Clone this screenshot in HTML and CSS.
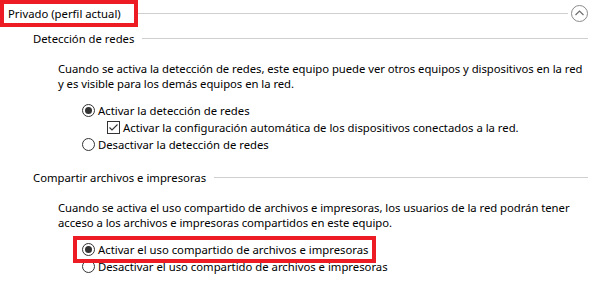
FILE: index.html
```html
<!DOCTYPE html>
<html>
  <head>
    <meta charset="UTF-8">
    <title>Configuración de uso compartido avanzado</title>
    <link rel="stylesheet" href="styles.css">
  </head>
  <body>
    <!-- Perfil privado -->
    <div class="profile-head">
      <span class="profile-title">Privado (perfil actual)</span>
      <span class="rule"></span>
      <button class="collapse-btn" aria-label="Contraer">
        <svg width="17" height="17" viewBox="0 0 17 17">
          <circle cx="8.5" cy="8.5" r="8" fill="none" stroke="#8a8a8a" stroke-width="1"/>
          <polyline points="4.5,10 8.5,6 12.5,10" fill="none" stroke="#6e6e6e" stroke-width="1.2"/>
        </svg>
      </button>
    </div>

    <!-- Detección de redes -->
    <div class="group">
      <div class="group-head">
        <span>Detección de redes</span>
        <span class="rule"></span>
      </div>
      <p class="desc">Cuando se activa la detección de redes, este equipo puede ver otros equipos y dispositivos en la red<br>y es visible para los demás equipos en la red.</p>
      <div class="options">
        <label class="option">
          <svg class="radio" width="13" height="13" viewBox="0 0 13 13">
            <circle cx="6.5" cy="6.5" r="6" fill="#fff" stroke="#333" stroke-width="1"/>
            <circle cx="6.5" cy="6.5" r="3.5" fill="#333"/>
          </svg>
          Activar la detección de redes
        </label>
        <label class="option sub">
          <svg class="check" width="13" height="13" viewBox="0 0 13 13">
            <rect x="0.5" y="0.5" width="12" height="12" fill="#fff" stroke="#333" stroke-width="1"/>
            <polyline points="2.5,6.5 5,9 10.5,3.5" fill="none" stroke="#333" stroke-width="1.1"/>
          </svg>
          Activar la configuración automática de los dispositivos conectados a la red.
        </label>
        <label class="option">
          <svg class="radio" width="13" height="13" viewBox="0 0 13 13">
            <circle cx="6.5" cy="6.5" r="6" fill="#fff" stroke="#333" stroke-width="1"/>
          </svg>
          Desactivar la detección de redes
        </label>
      </div>
    </div>

    <!-- Compartir archivos e impresoras -->
    <div class="group second">
      <div class="group-head">
        <span>Compartir archivos e impresoras</span>
        <span class="rule"></span>
      </div>
      <p class="desc">Cuando se activa el uso compartido de archivos e impresoras, los usuarios de la red podrán tener<br>acceso a los archivos e impresoras compartidos en este equipo.</p>
      <div class="options">
        <label class="option marked">
          <svg class="radio" width="13" height="13" viewBox="0 0 13 13">
            <circle cx="6.5" cy="6.5" r="6" fill="#fff" stroke="#333" stroke-width="1"/>
            <circle cx="6.5" cy="6.5" r="3.5" fill="#333"/>
          </svg>
          Activar el uso compartido de archivos e impresoras
        </label>
        <label class="option">
          <svg class="radio" width="13" height="13" viewBox="0 0 13 13">
            <circle cx="6.5" cy="6.5" r="6" fill="#fff" stroke="#333" stroke-width="1"/>
          </svg>
          Desactivar el uso compartido de archivos e impresoras
        </label>
      </div>
    </div>
  </body>
</html>
```

FILE: styles.css
```css
body {
  margin: 0;
  padding: 0 4px 0 0;
  background: #ffffff;
  color: #000000;
  font-family: "Noto Sans", "Open Sans", sans-serif;
  font-size: 11.3px;
  line-height: 15px;
}

.rule {
  flex: 1;
  height: 1px;
  background-color: #cfcfcf;
}

.profile-head {
  display: flex;
  align-items: center;
  margin-top: 4px;
  padding-left: 4px;
}

.profile-title {
  padding: 2px 13px 2px 4px;
  outline: 4px solid #ed1c24;
  margin-right: 4px;
}

.collapse-btn {
  border: none;
  background: none;
  padding: 0;
  margin-left: 3px;
  width: 17px;
  height: 17px;
  cursor: pointer;
}

.collapse-btn svg {
  display: block;
}

.group {
  padding-left: 33px;
}

.group-head {
  display: flex;
  align-items: center;
  margin-top: 8px;
}

.second .group-head {
  margin-top: 17px;
}

.group-head .rule {
  margin-left: 8px;
}

.desc {
  margin: 15px -4px 0 25px;
  letter-spacing: -0.04px;
  white-space: nowrap;
}

.options {
  margin: 11px 0 0 49px;
}

.option {
  display: flex;
  align-items: center;
  height: 17px;
  white-space: nowrap;
}

.option svg {
  margin-right: 3px;
  flex-shrink: 0;
}

.option.sub {
  padding-left: 25px;
}

.option.marked {
  width: fit-content;
  padding: 1px 4px 1px 5px;
  margin: -1px 0 -1px -5px;
  outline: 4px solid #ed1c24;
}
```
